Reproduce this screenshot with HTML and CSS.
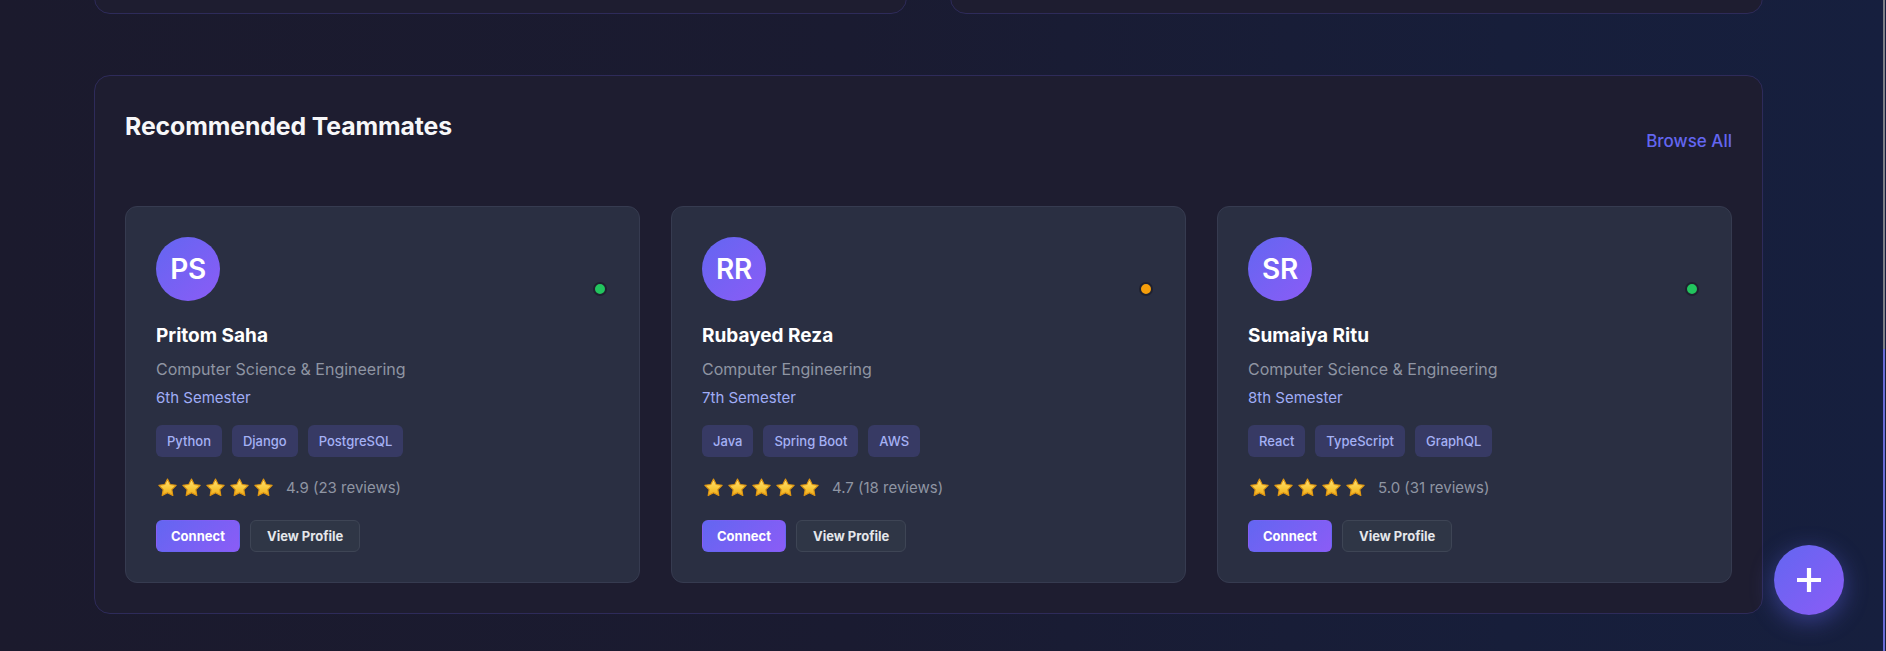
FILE: index.html
```html
<!DOCTYPE html>
<html lang="en">
<head>
<meta charset="utf-8">
<title>Dashboard – Recommended Teammates</title>
<link rel="stylesheet" href="styles.css">
</head>
<body>
<svg class="svg-defs" width="0" height="0" aria-hidden="true">
  <defs>
    <linearGradient id="starGrad" x1="0" y1="0" x2="0" y2="1">
      <stop offset="0" stop-color="#FFE27A"/>
      <stop offset="0.55" stop-color="#F9C93A"/>
      <stop offset="1" stop-color="#EFA91C"/>
    </linearGradient>
    <symbol id="star" viewBox="2 2 20 19.5">
      <path d="M12 2.9l2.8 5.7 6.3.9-4.55 4.45 1.07 6.27L12 17.25l-5.62 2.97 1.07-6.27L2.9 9.5l6.3-.9z" fill="url(#starGrad)" stroke="#DE9612" stroke-width="1.2" stroke-linejoin="round"/>
    </symbol>
  </defs>
</svg>

<main class="main">
  <div class="stats-row">
    <section class="panel panel-top"></section>
    <section class="panel panel-top"></section>
  </div>

  <section class="panel teammates">
    <div class="panel-header">
      <h2 class="panel-title">Recommended Teammates</h2>
      <a class="browse-link" href="#">Browse All</a>
    </div>

    <div class="mate-grid">
      <article class="mate-card">
        <div class="mate-head">
          <div class="avatar">PS</div>
          <span class="status status-online"></span>
        </div>
        <h3 class="mate-name">Pritom Saha</h3>
        <p class="mate-dept">Computer Science &amp; Engineering</p>
        <p class="mate-sem">6th Semester</p>
        <div class="tags">
          <span class="tag">Python</span>
          <span class="tag">Django</span>
          <span class="tag">PostgreSQL</span>
        </div>
        <div class="rating">
          <span class="stars">
            <svg class="star"><use href="#star"/></svg><svg class="star"><use href="#star"/></svg><svg class="star"><use href="#star"/></svg><svg class="star"><use href="#star"/></svg><svg class="star"><use href="#star"/></svg>
          </span>
          <span class="rating-text">4.9 (23 reviews)</span>
        </div>
        <div class="actions">
          <button class="btn btn-primary">Connect</button>
          <button class="btn btn-secondary">View Profile</button>
        </div>
      </article>

      <article class="mate-card">
        <div class="mate-head">
          <div class="avatar">RR</div>
          <span class="status status-away"></span>
        </div>
        <h3 class="mate-name">Rubayed Reza</h3>
        <p class="mate-dept">Computer Engineering</p>
        <p class="mate-sem">7th Semester</p>
        <div class="tags">
          <span class="tag">Java</span>
          <span class="tag">Spring Boot</span>
          <span class="tag">AWS</span>
        </div>
        <div class="rating">
          <span class="stars">
            <svg class="star"><use href="#star"/></svg><svg class="star"><use href="#star"/></svg><svg class="star"><use href="#star"/></svg><svg class="star"><use href="#star"/></svg><svg class="star"><use href="#star"/></svg>
          </span>
          <span class="rating-text">4.7 (18 reviews)</span>
        </div>
        <div class="actions">
          <button class="btn btn-primary">Connect</button>
          <button class="btn btn-secondary">View Profile</button>
        </div>
      </article>

      <article class="mate-card">
        <div class="mate-head">
          <div class="avatar">SR</div>
          <span class="status status-online"></span>
        </div>
        <h3 class="mate-name">Sumaiya Ritu</h3>
        <p class="mate-dept">Computer Science &amp; Engineering</p>
        <p class="mate-sem">8th Semester</p>
        <div class="tags">
          <span class="tag">React</span>
          <span class="tag">TypeScript</span>
          <span class="tag">GraphQL</span>
        </div>
        <div class="rating">
          <span class="stars">
            <svg class="star"><use href="#star"/></svg><svg class="star"><use href="#star"/></svg><svg class="star"><use href="#star"/></svg><svg class="star"><use href="#star"/></svg><svg class="star"><use href="#star"/></svg>
          </span>
          <span class="rating-text">5.0 (31 reviews)</span>
        </div>
        <div class="actions">
          <button class="btn btn-primary">Connect</button>
          <button class="btn btn-secondary">View Profile</button>
        </div>
      </article>
    </div>
  </section>
</main>

<button class="fab" aria-label="Create">
  <svg width="28" height="28" viewBox="0 0 28 28"><path d="M14 2v24M2 14h24" stroke="#fff" stroke-width="4.2" stroke-linecap="butt"/></svg>
</button>
<div class="scroll-track"></div>
</body>
</html>
```

FILE: styles.css
```css
* { box-sizing: border-box; }

html, body {
  margin: 0;
  height: 100%;
}

body {
  font-family: Inter, "Noto Sans", "Liberation Sans", sans-serif;
  background: linear-gradient(90deg, #1b1a2d 0%, #1a1b31 45%, #171e3a 80%, #161f3e 100%);
  color: #f3f4f6;
  overflow: hidden;
}

.svg-defs {
  position: absolute;
  width: 0;
  height: 0;
  overflow: hidden;
}

.main {
  width: 1763px;
  padding-left: 94px;
}

.stats-row {
  display: grid;
  grid-template-columns: 1fr 1fr;
  gap: 43px;
  margin-top: -106px;
}

.panel {
  background: #1e1d30;
  border: 1px solid #2e2b5a;
  border-radius: 16px;
}

.panel-top {
  height: 120px;
}

.teammates {
  margin-top: 61px;
  padding: 30px;
  height: 539px;
}

.panel-header {
  display: flex;
  justify-content: space-between;
  align-items: center;
  margin-bottom: 30px;
}

.panel-title {
  margin: 0 0 30px;
  font-size: 24.8px;
  line-height: 40px;
  font-weight: 700;
  color: #f7f7f9;
  letter-spacing: -0.1px;
}

.browse-link {
  color: #6366f1;
  font-size: 17px;
  font-weight: 500;
  text-decoration: none;
  line-height: 22px;
}

.mate-grid {
  display: grid;
  grid-template-columns: repeat(3, 1fr);
  gap: 31px;
}

.mate-card {
  background: #2a2f42;
  border: 1px solid #363b50;
  border-radius: 12px;
  padding: 30px;
}

.mate-head {
  display: flex;
  justify-content: space-between;
  align-items: flex-end;
  height: 64px;
}

.avatar {
  width: 64px;
  height: 64px;
  border-radius: 50%;
  background: linear-gradient(135deg, #6366f1 0%, #8b5cf6 100%);
  color: #fff;
  font-size: 28px;
  font-weight: 600;
  display: flex;
  align-items: center;
  justify-content: center;
  letter-spacing: -0.3px;
}

.status {
  width: 14px;
  height: 14px;
  border-radius: 50%;
  border: 2px solid #1f2130;
  margin: 0 2px 5px 0;
}

.status-online { background: #22c55e; }
.status-away { background: #f59e0b; }

.mate-name {
  margin: 22px 0 11px;
  font-size: 19px;
  line-height: 25px;
  font-weight: 700;
  color: #ffffff;
}

.mate-dept {
  margin: 0 0 7px;
  font-size: 16px;
  line-height: 21px;
  color: #8f95a3;
}

.mate-sem {
  margin: 0 0 17px;
  font-size: 15px;
  line-height: 21px;
  color: #a0adf6;
}

.tags {
  display: flex;
  gap: 10px;
  margin-bottom: 19px;
}

.tag {
  height: 32px;
  padding: 0 11px;
  display: flex;
  align-items: center;
  border-radius: 6px;
  background: #373a64;
  color: #a5b1f5;
  font-size: 13px;
  font-weight: 500;
}

.rating {
  display: flex;
  align-items: center;
  height: 22px;
  margin-bottom: 22px;
}

.stars {
  display: flex;
  gap: 5px;
  margin-left: 2px;
  margin-right: 13px;
}

.star {
  width: 19px;
  height: 19px;
  display: block;
}

.rating-text {
  font-size: 15px;
  color: #8f95a3;
}

.actions {
  display: flex;
  gap: 10px;
}

.btn {
  height: 32px;
  border-radius: 6px;
  font-family: inherit;
  font-size: 13px;
  font-weight: 700;
  padding: 0 14px;
  cursor: pointer;
}

.btn-primary {
  border: 1px solid transparent;
  background: linear-gradient(135deg, #6366f1 0%, #8b5cf6 100%);
  color: #fff;
}

.btn-secondary {
  border: 1px solid #3e4555;
  background: #2f3646;
  color: #e5e7eb;
  padding: 0 16px;
}

.fab {
  position: fixed;
  right: 42px;
  bottom: 36px;
  width: 70px;
  height: 70px;
  border-radius: 50%;
  border: none;
  background: linear-gradient(135deg, #6366f1 0%, #8b5cf6 100%);
  box-shadow: 0 6px 24px rgba(99, 102, 241, 0.45);
  display: flex;
  align-items: center;
  justify-content: center;
  padding: 0;
}

.scroll-track {
  position: fixed;
  top: 0;
  right: 1px;
  width: 2px;
  height: 100%;
  background: linear-gradient(180deg, #7d7f86 0, #7d7f86 349px, #6b6cd4 349px, #6b6cd4 100%);
}
```
